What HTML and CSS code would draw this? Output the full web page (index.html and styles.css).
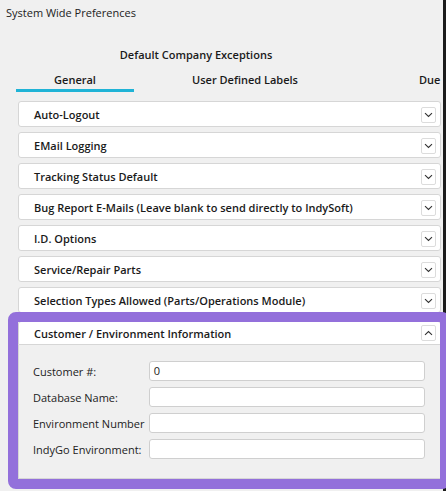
FILE: index.html
```html
<!DOCTYPE html>
<html>
<head>
<meta charset="utf-8">
<link rel="stylesheet" href="styles.css">
</head>
<body>
<div class="page">
  <div class="title">System Wide Preferences</div>
  <div class="subtitle">Default Company Exceptions</div>
  <div class="tabs">
    <div class="tab tab-general active">General</div>
    <div class="tab tab-labels">User Defined Labels</div>
    <div class="tab tab-due">Due</div>
  </div>
  <div class="list">
    <div class="item"><span class="item-label">Auto-Logout</span><span class="chev"><svg width="9" height="6" viewBox="0 0 9 6"><path d="M1 1.2 L4.5 4.5 L8 1.2" fill="none" stroke="#333" stroke-width="1.1"/></svg></span></div>
    <div class="item"><span class="item-label">EMail Logging</span><span class="chev"><svg width="9" height="6" viewBox="0 0 9 6"><path d="M1 1.2 L4.5 4.5 L8 1.2" fill="none" stroke="#333" stroke-width="1.1"/></svg></span></div>
    <div class="item"><span class="item-label">Tracking Status Default</span><span class="chev"><svg width="9" height="6" viewBox="0 0 9 6"><path d="M1 1.2 L4.5 4.5 L8 1.2" fill="none" stroke="#333" stroke-width="1.1"/></svg></span></div>
    <div class="item"><span class="item-label">Bug Report E-Mails (Leave blank to send directly to IndySoft)</span><span class="chev"><svg width="9" height="6" viewBox="0 0 9 6"><path d="M1 1.2 L4.5 4.5 L8 1.2" fill="none" stroke="#333" stroke-width="1.1"/></svg></span></div>
    <div class="item"><span class="item-label">I.D. Options</span><span class="chev"><svg width="9" height="6" viewBox="0 0 9 6"><path d="M1 1.2 L4.5 4.5 L8 1.2" fill="none" stroke="#333" stroke-width="1.1"/></svg></span></div>
    <div class="item"><span class="item-label">Service/Repair Parts</span><span class="chev"><svg width="9" height="6" viewBox="0 0 9 6"><path d="M1 1.2 L4.5 4.5 L8 1.2" fill="none" stroke="#333" stroke-width="1.1"/></svg></span></div>
    <div class="item"><span class="item-label">Selection Types Allowed (Parts/Operations Module)</span><span class="chev"><svg width="9" height="6" viewBox="0 0 9 6"><path d="M1 1.2 L4.5 4.5 L8 1.2" fill="none" stroke="#333" stroke-width="1.1"/></svg></span></div>
    <div class="expanded">
      <div class="exp-header"><span class="item-label">Customer / Environment Information</span><span class="chev chev-up"><svg width="9" height="6" viewBox="0 0 9 6"><path d="M1 4.8 L4.5 1.5 L8 4.8" fill="none" stroke="#333" stroke-width="1.1"/></svg></span></div>
      <div class="exp-body">
        <div class="row"><label>Customer #:</label><div class="input">0</div></div>
        <div class="row"><label>Database Name:</label><div class="input"></div></div>
        <div class="row"><label>Environment Number</label><div class="input"></div></div>
        <div class="row"><label>IndyGo Environment:</label><div class="input"></div></div>
      </div>
      <div class="highlight"></div>
    </div>
  </div>
</div>
</body>
</html>
```
FILE: styles.css
```css
html, body {
  margin: 0;
  padding: 0;
  overflow: hidden;
}
body {
  background: #f0f0f0;
  font-family: "Open Sans", "Noto Sans", sans-serif;
  font-size: 11px;
  color: #1a1a1a;
}
.page {
  width: 446px;
  height: 491px;
  box-sizing: border-box;
  border-right: 3px solid #1c1c1c;
  position: relative;
}
.title {
  padding: 4px 0 0 6px;
  height: 20px;
  line-height: 18px;
  color: #222;
}
.subtitle {
  margin-top: 23px;
  text-align: center;
  width: 392px;
  font-weight: 600;
  line-height: 16px;
}
.tabs {
  display: flex;
  margin-top: 8px;
  width: 442px;
  overflow: hidden;
  height: 22px;
}
.tab {
  font-weight: 600;
  line-height: 17px;
  height: 21px;
  box-sizing: border-box;
  white-space: nowrap;
}
.tab-general {
  margin-left: 16px;
  width: 118px;
  text-align: center;
}
.tab-general.active {
  border-bottom: 3px solid #1fb3d6;
}
.tab-labels {
  width: 222px;
  text-align: center;
}
.tab-due {
  padding-left: 63px;
}
.list {
  margin-top: 8px;
  margin-left: 18px;
  width: 423px;
  display: flex;
  flex-direction: column;
  gap: 5px;
}
.item, .exp-header {
  height: 26px;
  box-sizing: border-box;
  background: #fff;
  border: 1px solid #d6d6d6;
  border-radius: 3px;
  display: flex;
  align-items: center;
  justify-content: space-between;
  padding: 0 4px 0 15px;
}
.item-label {
  font-weight: 600;
  white-space: nowrap;
}
.chev {
  width: 15px;
  height: 16px;
  box-sizing: border-box;
  border: 1px solid #dcdcdc;
  border-radius: 2px;
  background: #fff;
  display: flex;
  align-items: center;
  justify-content: center;
  margin-top: 2px;
}
.expanded {
  position: relative;
  margin-top: 3px;
}
.exp-header {
  height: 24px;
  border-radius: 3px 3px 0 0;
}
.chev-up {
  margin-top: 0;
}
.exp-body {
  border: 1px solid #d6d6d6;
  border-top: none;
  background: #f0f0f0;
  padding: 16px 15px 19px 14px;
  display: flex;
  flex-direction: column;
  gap: 6px;
  height: 134px;
  box-sizing: border-box;
}
.row {
  display: flex;
  align-items: center;
}
.row label {
  width: 116px;
  color: #222;
  white-space: nowrap;
}
.input {
  width: 277px;
  height: 20px;
  box-sizing: border-box;
  background: #fff;
  border: 1px solid #cfcfcf;
  border-radius: 3px;
  padding-left: 4px;
  line-height: 18px;
}
.highlight {
  position: absolute;
  top: -9px;
  left: -10px;
  right: -9px;
  bottom: -10px;
  border: 10px solid #9370db;
  border-radius: 8px;
  pointer-events: none;
}
```
